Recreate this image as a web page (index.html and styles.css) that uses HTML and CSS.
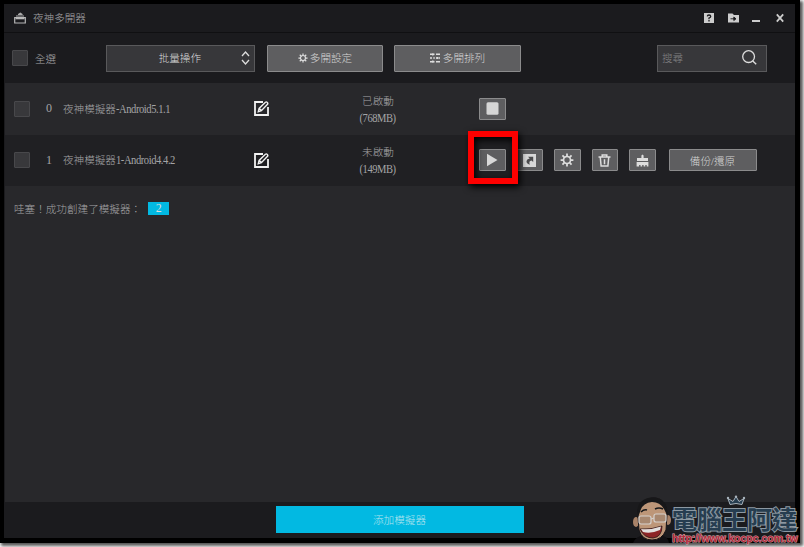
FILE: index.html
```
<!DOCTYPE html>
<html lang="zh-Hant">
<head>
  <meta charset="UTF-8">
  <meta name="viewport" content="width=device-width, initial-scale=1.0">
  <title>夜神多開器</title>
  <link rel="stylesheet" href="styles.css">
</head>
<body>
  <div class="window">
    <header class="titlebar">
      <svg class="logo" viewBox="0 0 12 12">
        <path d="M4 2 6.300.5 8.600 2v1H4zM2 3.500h8v1H2z" fill="#aaa"/>
        <path d="M.7 5.500h10.600v5.500H.7z" fill="none" stroke="#b5b5b5" stroke-width="1.200"/>
        <path d="M1.500 5h9v2.300h-9z" fill="#bbb"/>
      </svg>
      <h1>夜神多開器</h1>
      <nav class="win-controls">
        <svg width="10" height="10" viewBox="0 0 10 10"><path d="M0 0h10v10H0z" fill="#ccc"/><path d="M3.3 3.4Q3.4 2 5 2t1.7 1.4Q6.7 4.4 5 5v1.3M5 7.1v1.3" fill="none" stroke="#19191c" stroke-width="1.3"/></svg>
        <svg width="11" height="10" viewBox="0 0 11 10"><path d="M0 .5h4.5L6 2h5v7.5H0z" fill="#ccc"/><path d="M2.5 5.8H6M5.8 4.1 8 5.8 5.8 7.5z" fill="#19191c" stroke="#19191c" stroke-width=".9"/></svg>
        <svg width="8" height="10" viewBox="0 0 8 10"><path d="M0 8h8" stroke="#ccc" stroke-width="2"/></svg>
        <svg width="8" height="10" viewBox="0 0 8 10"><path d="m.8 1.4 6.4 7.2M7.2 1.4.8 8.6" stroke="#ccc" stroke-width="1.8"/></svg>
      </nav>
    </header>

    <div class="toolbar">
      <span class="checkbox"></span>
      <span class="all">全選</span>
      <div class="field select">批量操作
        <svg width="9" height="14" viewBox="0 0 9 14"><path d="m1 5 3.5-4L8 5M1 9l3.5 4L8 9" fill="none" stroke="#ddd" stroke-width="1.3"/></svg>
      </div>
      <button class="btn btn-setting">
        <svg width="10" height="10" viewBox="0 0 16 16"><use href="#gear"/></svg>多開設定
      </button>
      <button class="btn btn-arrange">
        <svg width="10" height="10" viewBox="0 0 10 10"><path d="M0 1.3h4.5M6 1.3h4M0 5h2M3.3 5h1.5M6 5h1.3M8.3 5H10M0 8.7h4.5M6 8.7h4M2.8.2v2.2M7.3 3.9v2.2M2.8 7.6v2.2" stroke="#ddd" stroke-width="1.4"/></svg>多開排列
      </button>
      <div class="field search">搜尋
        <svg width="15" height="15" viewBox="0 0 15 15"><circle cx="6.6" cy="6.6" r="5.9" fill="none" stroke="#ddd" stroke-width="1.3"/><path d="m10.8 11 3.4 3.2" stroke="#ddd" stroke-width="1.4"/></svg>
      </div>
    </div>

    <main class="list">
      <div class="row">
        <span class="checkbox"></span>
        <span class="index">0</span>
        <span class="name">夜神模擬器<span class="latin">-Android5.1.1</span></span>
        <svg class="edit" viewBox="0 0 15 15"><use href="#edit"/></svg>
        <div class="status"><span>已啟動</span><span class="memory">(768MB)</span></div>
        <div class="actions">
          <button class="btn icon-btn"><svg width="13" height="13"><rect x=".5" y=".3" width="12" height="12.4" rx="1.5" fill="#d6d6d6"/></svg></button>
        </div>
      </div>
      <div class="row dark">
        <span class="checkbox"></span>
        <span class="index">1</span>
        <span class="name">夜神模擬器<span class="latin">1-Android4.4.2</span></span>
        <svg class="edit" viewBox="0 0 15 15"><use href="#edit"/></svg>
        <div class="status"><span>未啟動</span><span class="memory">(149MB)</span></div>
        <div class="actions">
          <div class="play">
            <button class="btn icon-btn"><svg width="12" height="14" viewBox="0 0 12 14"><path d="M1 .8 11.5 7 1 13.2z" fill="#d8d8d8"/></svg></button>
            <span class="highlight"></span>
          </div>
          <button class="btn icon-btn"><svg width="13" height="13" viewBox="0 0 13 13"><path d="M0 0h13v13H0z" fill="#d8d8d8"/><path d="M5 2.800h5.200V8L8.500 6.400Q5.400 6.800 6.800 10.700 3.200 9.500 3.500 7 4 4.800 6.700 4.500z" fill="#4c4c4e"/></svg></button>
          <button class="btn icon-btn"><svg width="14" height="14" viewBox="0 0 16 16"><use href="#gear"/></svg></button>
          <button class="btn icon-btn"><svg width="13" height="13" viewBox="0 0 13 13"><path d="M.5 3h12M4.2 3V1h4.6v2M2.3 3.5l.8 8.6h6.8l.8-8.6M6.5 5.3v5" fill="none" stroke="#ddd" stroke-width="1.5"/></svg></button>
          <button class="btn icon-btn"><svg width="13" height="13" viewBox="0 0 13 13"><path d="M5.4 1.4 6.5.4l1.1 1V4H12v3H1V4h4.4zM.6 8h11.8v4.6h-1.7V11H9.3v1.6H7.6V11H6.2v1.6H4.5V11H3.1v1.6H.6z" fill="#ddd"/></svg></button>
          <button class="btn backup">備份/還原</button>
        </div>
      </div>
      <p class="summary">哇塞！成功創建了模擬器：<span class="badge">2</span></p>
    </main>

    <footer class="footer">
      <button class="add">添加模擬器</button>
    </footer>
  </div>

  <!-- 右下角網站標誌 -->
  <div class="watermark">
    <svg class="face" viewBox="0 0 42 46">
      <path d="M1 46q3-7 11-8h16q8 1 9 8z" fill="#111013"/>
      <ellipse cx="4" cy="25" rx="3" ry="5" fill="#a88268"/>
      <ellipse cx="36" cy="23" rx="3" ry="5" fill="#a88268"/>
      <path d="M6 20C5 9 10 2 20 1s15 6 15 17l-1 15q-4 10-14 10T7 33z" fill="#bd9678" stroke="#161317"/>
      <path d="M6 20C3 8 10 1 20 .5S36 6 35 18l-3-6Q28 5 20 5 10 6 8 15z" fill="#171719"/>
      <path d="M9 15q3-3 6-2M23 12q4-2 8 0" fill="none" stroke="#171719" stroke-width="1.500"/>
      <rect x="7" y="19" width="12" height="8" rx="2" fill="#a88870" stroke="#d5d0cc" stroke-width="1.200"/>
      <rect x="22" y="17" width="12" height="8" rx="2" fill="#a88870" stroke="#d5d0cc" stroke-width="1.200"/>
      <path d="m19 22 3-1" fill="none" stroke="#d5d0cc" stroke-width="1.200"/>
      <path d="M8 32q11 1 22-3 0 11-9 12-9 0-13-9z" fill="#8d2527" stroke="#2a1718" stroke-width=".8"/>
      <path d="M9 32q10 1 20-2.500l-1 3.500q-9 4-17 2z" fill="#e2e0df"/>
    </svg>
    <div class="brand">
      <svg class="crown" viewBox="0 0 20 10"><path d="m4 9-2-6 5 3 3-5 3 5 5-3-2 6q-6-2-12 0z" fill="#263d50" stroke="#a7b2bb"/><circle cx="2" cy="2.5" r="1.2" fill="#a7b2bb"/><circle cx="10" cy="1.3" r="1.2" fill="#a7b2bb"/><circle cx="18" cy="2.5" r="1.2" fill="#a7b2bb"/></svg>
      <strong>電腦王阿達</strong>
      <span class="url">http://www.kocpc.com.tw</span>
    </div>
  </div>

  <svg class="defs" width="0" height="0">
    <symbol id="gear" viewBox="0 0 16 16">
      <circle cx="8" cy="8" r="4" fill="none" stroke="#ddd" stroke-width="1.9"/>
      <path d="M8 .7v3M8 12.3v3M.7 8h3M12.3 8h3M2.8 2.8 5 5M11 11l2.2 2.2M13.2 2.8 11 5M5 11l-2.2 2.2" stroke="#ddd" stroke-width="2"/>
    </symbol>
    <symbol id="edit" viewBox="0 0 15 15">
      <path d="M9 1H1v13h13V6" fill="none" stroke="#f2f2f2" stroke-width="1.8"/>
      <path d="m4.300 10.700.8-3.300 6.300-6.200q1-.7 1.900.2t.2 1.900L7.400 9.700zM5.300 7.500l2 2" fill="none" stroke="#f2f2f2" stroke-width="1.4"/>
    </symbol>
  </svg>
</body>
</html>
```

FILE: styles.css
```
* {
  box-sizing: border-box;
}
body {
  margin: 0;
  height: 547px;
  overflow: hidden;
  background: #fff;
  font-family: "Liberation Serif", "Noto Sans CJK TC", serif;
  font-size: 10.6px;
  font-weight: 300;
  color: #a4a4a6;
}
svg {
  display: block;
  flex: none;
}
.window {
  width: 800px;
  height: 543px;
  display: flex;
  flex-direction: column;
  border: 4px solid #000;
  border-right-width: 5px;
  border-bottom-width: 5px;
  background: #1b1b1e;
  box-shadow: 2px 2px 3px 1px #555;
}
/* 標題列 */
.titlebar {
  height: 29px;
  display: flex;
  align-items: center;
  padding: 0 11px 1px 10px;
  border-bottom: 1px solid #101012;
}
.logo {
  width: 12px;
  height: 12px;
}
.titlebar h1 {
  margin: 0 auto 0 7px;
  font-size: 10.6px;
  font-weight: 300;
}
.win-controls {
  display: flex;
  gap: 14px;
}
.win-controls svg:nth-child(2) {
  margin-right: -1px;
}
.win-controls svg:last-child {
  margin-left: 2px;
}
/* 工具列 */
.toolbar {
  height: 50px;
  display: flex;
  align-items: center;
  padding: 0 28px 0 8px;
}
.checkbox {
  width: 16px;
  height: 16px;
  background: #38383b;
  border: 1px solid #48484b;
  border-radius: 1px;
}
.all {
  width: 71px;
  margin-left: 7px;
}
.field {
  height: 27px;
  display: flex;
  align-items: center;
  border: 1px solid #59595b;
  background: #37373a;
}
.select {
  width: 149px;
  justify-content: flex-end;
  gap: 40px;
  padding: 0 4px 1px 0;
  color: #ddd;
}
.btn {
  display: flex;
  align-items: center;
  justify-content: center;
  padding: 0;
  border: 1px solid #8b8b8c;
  border-radius: 1px;
  background: #5e5e60;
  color: #d4d4d4;
  font: inherit;
}
.btn-setting {
  width: 116px;
  height: 27px;
  gap: 2px;
  margin-left: 12px;
  padding-bottom: 1px;
}
.btn-arrange {
  width: 127px;
  height: 27px;
  gap: 3px;
  margin-left: 11px;
  padding-bottom: 1px;
}
.search {
  width: 110px;
  justify-content: space-between;
  margin-left: auto;
  padding: 0 9px 1px 4px;
  color: #808082;
}
/* 模擬器清單 */
.list {
  flex: 1;
  margin-left: 1px;
  background: #28282b;
}
.row {
  height: 52px;
  display: grid;
  grid-template-columns: 16px 38px 186px 15px 218px 1fr;
  align-items: center;
  padding: 0 0 1px 9px;
}
.row.dark {
  height: 51px;
  background: #202023;
}
.index {
  text-align: center;
  font-size: 12px;
}
.name {
  margin-left: -5px;
  white-space: nowrap;
}
/* 英數字稍微壓窄 */
.latin,
.memory {
  display: inline-block;
  font-size: 12px;
  letter-spacing: -0.5px;
  transform: scaleX(0.88);
}
.latin {
  transform-origin: left;
}
.edit {
  width: 15px;
  height: 15px;
}
.status {
  display: flex;
  flex-direction: column;
  align-items: center;
  padding-top: 2px;
  line-height: 17px;
}
.actions {
  display: flex;
  gap: 11px;
  margin-left: -8px;
}
.icon-btn {
  width: 26.5px;
  height: 22px;
}
.backup {
  width: 88px;
  height: 22px;
  margin-left: 2px;
}
.play {
  position: relative;
}
.highlight {
  position: absolute;
  top: -18px;
  left: -11px;
  width: 50px;
  height: 53px;
  border: 6px solid #fe0000;
  box-shadow: 2px 3px 7px #000, inset 2px 3px 7px #000;
}
.summary {
  display: flex;
  align-items: center;
  margin: 15px 0 0 9px;
}
.badge {
  width: 21px;
  height: 13px;
  margin-left: 7px;
  background: #02b9e2;
  color: #ddd;
  font-size: 12px;
  line-height: 13px;
  text-align: center;
}
.footer {
  height: 36px;
  display: flex;
  justify-content: center;
  align-items: center;
  padding-bottom: 2px;
}
.add {
  width: 248px;
  height: 27px;
  border: 0;
  padding: 0;
  background: #02b9e2;
  color: #b5e4ee;
  font: inherit;
}
/* 右下角標誌 */
.watermark {
  position: absolute;
  left: 632px;
  top: 495px;
  width: 172px;
  height: 50px;
  display: flex;
}
.face {
  width: 42px;
  height: 46px;
  margin-top: 2px;
}
.brand {
  display: flex;
  flex-direction: column;
  margin-left: -2px;
}
.crown {
  width: 20px;
  height: 11px;
  margin-left: 54px;
}
.brand strong {
  font-family: "Noto Sans CJK TC", sans-serif;
  font-size: 25px;
  line-height: 25px;
  font-weight: 700;
  color: #263d50;
  -webkit-text-stroke: 2px #8c98a2;
  paint-order: stroke fill;
  white-space: nowrap;
}
.url {
  margin-top: 1px;
  font: bold 10.5px/12px "Liberation Sans", sans-serif;
  color: #b3283a;
  -webkit-text-stroke: 1px #d0a5a9;
  paint-order: stroke fill;
}
.defs {
  position: absolute;
}
```
